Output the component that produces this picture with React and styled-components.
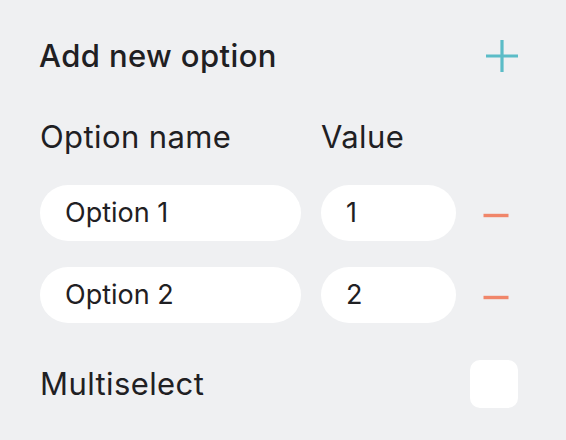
import React, { useState } from 'react';
import styled, { createGlobalStyle } from 'styled-components';

const GlobalStyle = createGlobalStyle`
  html, body {
    margin: 0;
    padding: 0;
    background: #eff0f2;
  }
  body {
    font-family: Inter, "Noto Sans", sans-serif;
    color: #1f2023;
  }
`;

const Panel = styled.div`
  box-sizing: border-box;
  width: 566px;
  min-height: 440px;
  padding: 40px 48px 32px 40px;
  background: #eff0f2;
`;

const TitleRow = styled.div`
  display: flex;
  align-items: center;
  justify-content: space-between;
  height: 32px;
`;

const Title = styled.h2`
  margin: 0 0 0 -1px;
  font-size: 31px;
  line-height: 32px;
  font-weight: 500;
  letter-spacing: 0.4px;
  color: #1f2023;
`;

const IconButton = styled.button`
  display: flex;
  align-items: center;
  justify-content: center;
  padding: 0;
  border: none;
  background: transparent;
  cursor: pointer;
  width: ${props => props.size}px;
  height: ${props => props.size}px;
  color: ${props => props.color};
`;

const Grid = styled.div`
  display: grid;
  grid-template-columns: 261px 135px 40px;
  column-gap: 20px;
  align-items: center;
`;

const HeaderGrid = styled(Grid)`
  margin-top: 47px;
  margin-bottom: 30px;
`;

const Label = styled.span`
  font-size: 31px;
  line-height: 36px;
  font-weight: 400;
  letter-spacing: 0.4px;
  color: #1f2023;
`;

const Rows = styled.div`
  display: flex;
  flex-direction: column;
  gap: 26px;
`;

const Input = styled.input`
  box-sizing: border-box;
  width: 100%;
  height: 56px;
  padding: 0 25px;
  border: none;
  outline: none;
  border-radius: 28px;
  background: #ffffff;
  font-family: Inter, "Noto Sans", sans-serif;
  font-size: 27px;
  line-height: 56px;
  color: #1f2023;
`;

const Footer = styled.div`
  display: flex;
  align-items: center;
  justify-content: space-between;
  margin-top: 37px;
`;

const FooterLabel = styled.span`
  font-size: 31px;
  line-height: 48px;
  letter-spacing: 0.4px;
  color: #1f2023;
`;

const Checkbox = styled.button`
  width: 48px;
  height: 48px;
  padding: 0;
  border: none;
  border-radius: 10px;
  background: #ffffff;
  cursor: pointer;
  display: flex;
  align-items: center;
  justify-content: center;
  color: #5bbcc7;
`;

function PlusIcon() {
  return (
    <svg width="32" height="32" viewBox="0 0 32 32">
      <path d="M16 0v32M0 16h32" stroke="currentColor" strokeWidth="3.2" />
    </svg>
  );
}

function MinusIcon() {
  return (
    <svg width="26" height="34" viewBox="0 0 26 34">
      <path d="M0.5 19.5h25" stroke="currentColor" strokeWidth="3.4" />
    </svg>
  );
}

function App() {
  const [options, setOptions] = useState([
    { id: 1, name: 'Option 1', value: '1' },
    { id: 2, name: 'Option 2', value: '2' },
  ]);
  const [multiselect, setMultiselect] = useState(false);

  const addOption = () => {
    const id = options.length ? options[options.length - 1].id + 1 : 1;
    setOptions(list => [...list, { id, name: `Option ${id}`, value: `${id}` }]);
  };

  const updateOption = (id, field, text) => {
    setOptions(list =>
      list.map(option => (option.id === id ? { ...option, [field]: text } : option)),
    );
  };

  const removeOption = id => {
    setOptions(list => list.filter(option => option.id !== id));
  };

  return (
    <>
      <GlobalStyle />
      <Panel>
        <TitleRow>
          <Title>Add new option</Title>
          <IconButton type="button" size={32} color="#5bbcc7" onClick={addOption}>
            <PlusIcon />
          </IconButton>
        </TitleRow>

        <HeaderGrid>
          <Label>Option name</Label>
          <Label>Value</Label>
        </HeaderGrid>

        <Rows>
          {options.map(option => (
            <Grid key={option.id}>
              <Input
                value={option.name}
                onChange={event => updateOption(option.id, 'name', event.target.value)}
              />
              <Input
                value={option.value}
                onChange={event => updateOption(option.id, 'value', event.target.value)}
              />
              <IconButton
                type="button"
                size={40}
                color="#f0866a"
                onClick={() => removeOption(option.id)}
              >
                <MinusIcon />
              </IconButton>
            </Grid>
          ))}
        </Rows>

        <Footer>
          <FooterLabel>Multiselect</FooterLabel>
          <Checkbox type="button" onClick={() => setMultiselect(on => !on)}>
            {multiselect && (
              <svg width="24" height="24" viewBox="0 0 24 24">
                <path d="M4 12l5 5L20 6" fill="none" stroke="currentColor" strokeWidth="3" />
              </svg>
            )}
          </Checkbox>
        </Footer>
      </Panel>
    </>
  );
}

export default App;
